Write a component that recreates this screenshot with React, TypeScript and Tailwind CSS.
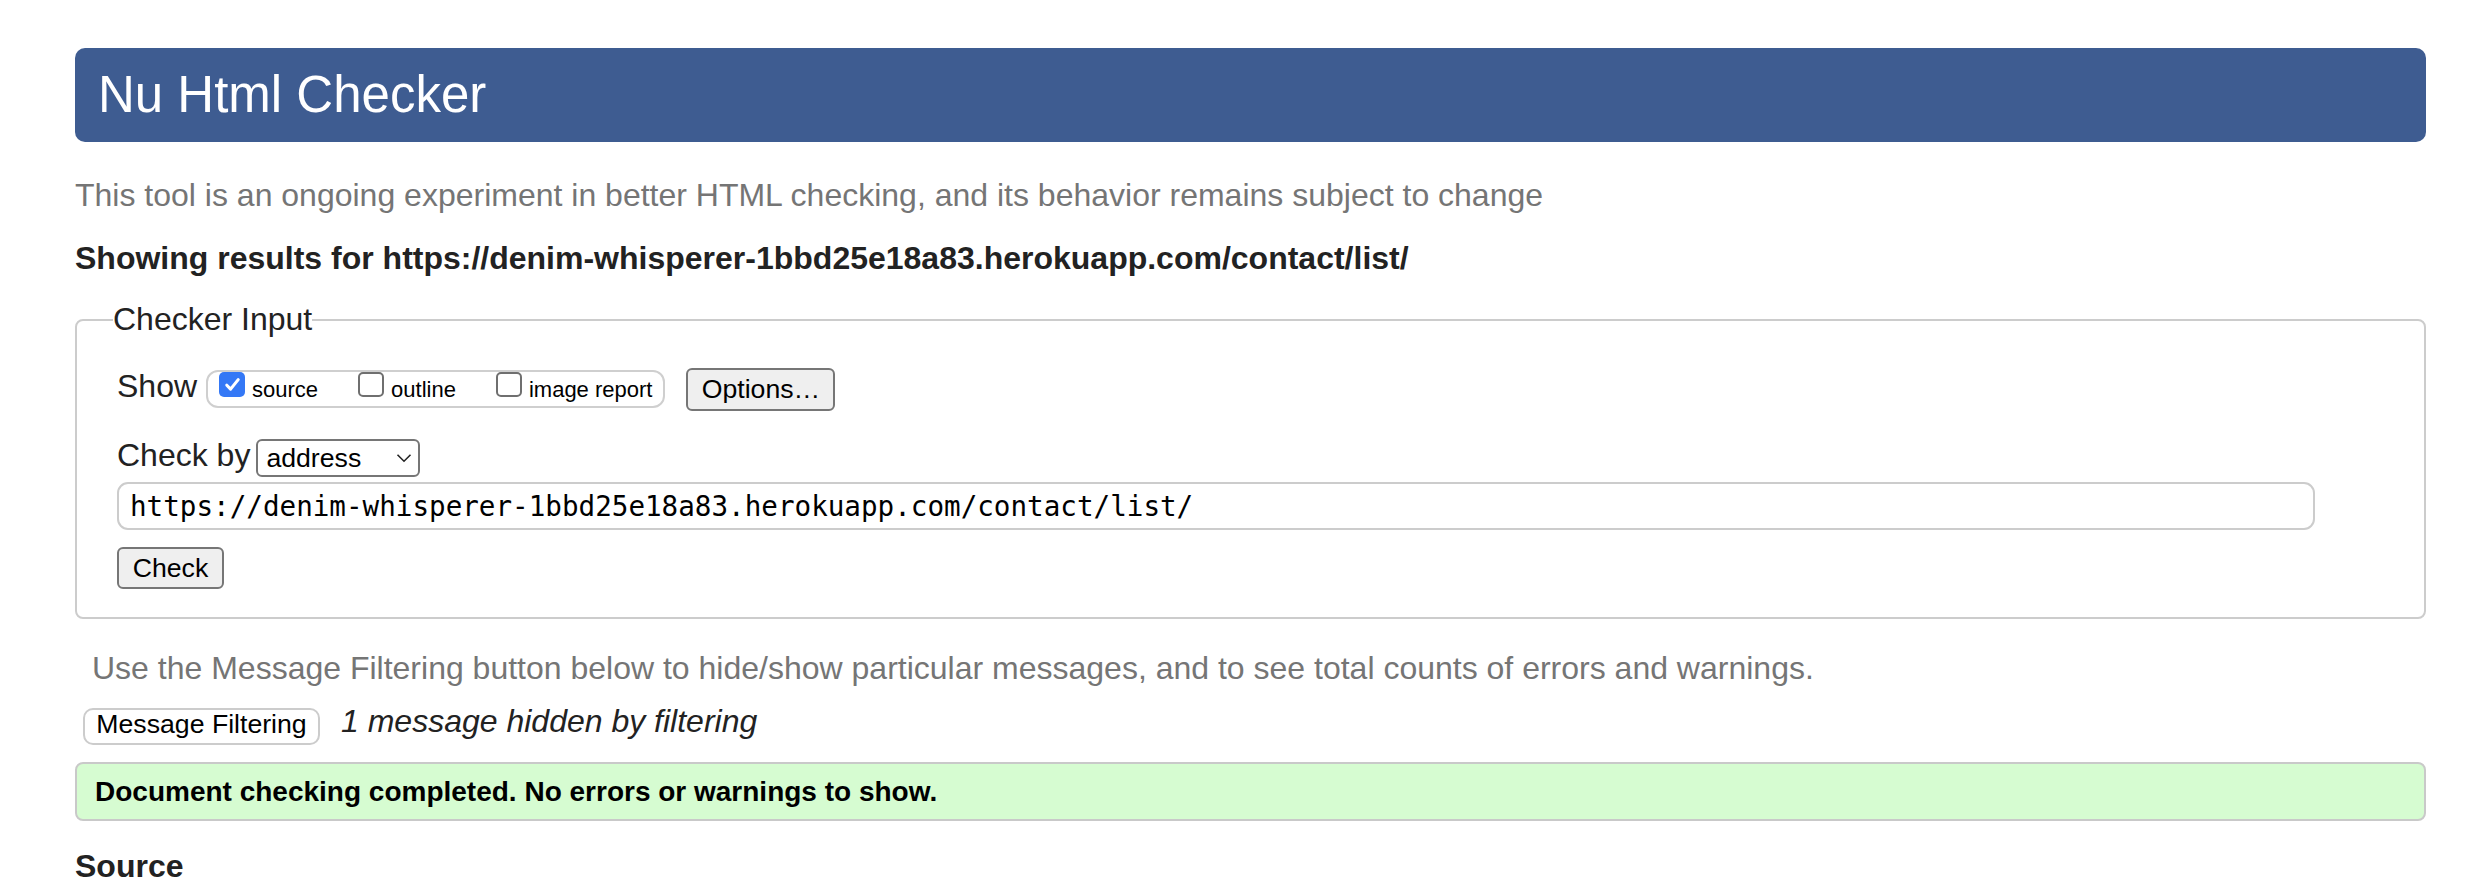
import React from "react";

function Checkbox({ checked }: { checked?: boolean }) {
  if (checked) {
    return (
      <span className="flex h-[25px] w-[26px] shrink-0 items-center justify-center rounded-[5px] bg-[#3478f6]">
        <svg viewBox="0 0 16 16" className="h-[19px] w-[19px]">
          <path d="M3.2 8.6l3.2 3.3 6.4-8" fill="none" stroke="#fff" strokeWidth="2.6" strokeLinecap="round" strokeLinejoin="round" />
        </svg>
      </span>
    );
  }
  return <span className="h-[25px] w-[26px] shrink-0 rounded-[5px] border-2 border-[#6f6f6f] bg-white" />;
}

function ShowOption({ label, checked, first }: { label: string; checked?: boolean; first?: boolean }) {
  return (
    <label className={`flex items-start gap-[7px] ${first ? "" : "ml-[40px]"}`}>
      <Checkbox checked={checked} />
      <span className="mt-[5px] text-[22px] leading-[25px] text-black">{label}</span>
    </label>
  );
}

export default function App() {
  return (
    <div className="min-h-screen bg-white pl-[75px] pr-[60px] pt-[48px] font-['Liberation_Sans',Arial,sans-serif] text-[32px] leading-[37px] text-[#222]">
      <h1 className="flex h-[94px] items-center rounded-[10px] bg-[#3e5c91] px-[23px] text-[51px] font-normal leading-[58px] text-white">
        Nu Html Checker
      </h1>

      <p className="mt-[35px] text-[#757575]">
        This tool is an ongoing experiment in better HTML checking, and its behavior remains subject to change
      </p>
      <p className="mt-[26px] font-bold text-[#222]">
        Showing results for https://denim-whisperer-1bbd25e18a83.herokuapp.com/contact/list/
      </p>

      <fieldset className="mt-[24px] rounded-[8px] border-2 border-[#cccccc] px-[40px] pb-[28px]">
        <legend className="-ml-[4px] text-[32px] leading-[37px] text-[#222]">Checker Input</legend>

        <div className="flex items-start pt-[30px]">
          <span className="text-[#222]">Show</span>
          <div className="ml-[9px] mt-[2px] flex h-[38px] items-start rounded-[12px] border-2 border-[#cfcfcf] pl-[11px] pr-[11px]">
            <ShowOption label="source" checked first />
            <ShowOption label="outline" />
            <ShowOption label="image report" />
          </div>
          <button className="ml-[21px] flex h-[43px] w-[149px] items-center justify-center rounded-[6px] border-2 border-[#767676] bg-[#efefef] text-[26.67px] leading-[31px] text-black">
            Options…
          </button>
        </div>

        <div className="mt-[26px] flex items-start">
          <span className="text-[#222]">Check by</span>
          <div className="ml-[6px] mt-[2px] flex h-[38px] w-[164px] items-center justify-between rounded-[6px] border-2 border-[#767676] bg-white pl-[8px] pr-[6px]">
            <span className="text-[26.67px] leading-[31px] text-black">address</span>
            <svg viewBox="0 0 16 10" className="h-[10px] w-[16px]">
              <path d="M1.5 1.8L8 8.2l6.5-6.4" fill="none" stroke="#222" strokeWidth="1.6" />
            </svg>
          </div>
        </div>

        <input
          readOnly
          value="https://denim-whisperer-1bbd25e18a83.herokuapp.com/contact/list/"
          className="mt-[5px] block h-[48px] w-[2198px] rounded-[11px] border-2 border-[#cccccc] bg-white pl-[11px] font-['DejaVu_Sans_Mono',monospace] text-[27.6px] text-black outline-none"
        />

        <button className="mt-[17px] flex h-[42px] w-[107px] items-center justify-center rounded-[6px] border-2 border-[#767676] bg-[#efefef] text-[26.67px] leading-[31px] text-black">
          Check
        </button>
      </fieldset>

      <p className="ml-[17px] mt-[31px] text-[#757575]">
        Use the Message Filtering button below to hide/show particular messages, and to see total counts of errors and warnings.
      </p>

      <div className="mt-[16px] flex items-start">
        <button className="ml-[8px] mt-[5px] flex h-[37px] w-[237px] items-center justify-center rounded-[10px] border-2 border-[#cccccc] bg-white pb-[4px] text-[26.67px] leading-[31px] text-black">
          Message Filtering
        </button>
        <span className="ml-[21px] italic text-[#222]">1 message hidden by filtering</span>
      </div>

      <div className="mt-[17px] flex h-[59px] items-center rounded-[8px] border-2 border-[#c9c9c9] bg-[#d6fcd1] pl-[18px]">
        <p className="text-[28px] font-bold leading-[32px] text-black">
          Document checking completed. No errors or warnings to show.
        </p>
      </div>

      <h2 className="mt-[27px] text-[32px] font-bold leading-[37px] text-[#222]">Source</h2>
    </div>
  );
}
